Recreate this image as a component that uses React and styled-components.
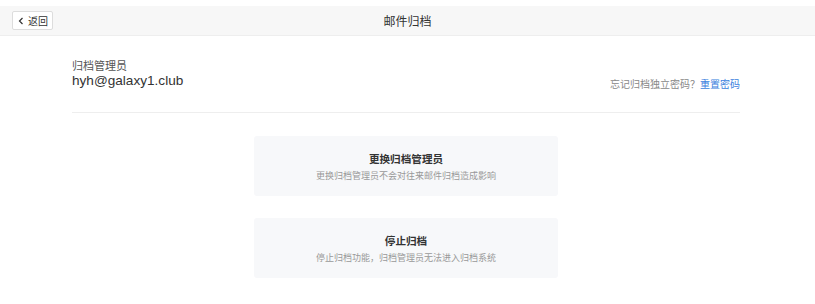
import styled, { createGlobalStyle } from 'styled-components';

const GlobalStyle = createGlobalStyle`
  body {
    margin: 0;
    background: #ffffff;
    font-family: 'Noto Sans CJK SC', 'Liberation Sans', sans-serif;
    color: #333333;
  }
`;

const Page = styled('div')`
  padding-top: 6px;
`;

const Header = styled('div')`
  position: relative;
  height: 29px;
  background: #f7f7f7;
  border-bottom: 1px solid #eeeeee;
  display: flex;
  align-items: center;
  justify-content: center;
`;

const BackButton = styled('button')`
  position: absolute;
  left: 12px;
  top: 5px;
  width: 41px;
  height: 19px;
  box-sizing: border-box;
  padding: 0 0 0 4px;
  border: 1px solid #dddddd;
  border-radius: 2px;
  background: #ffffff;
  display: flex;
  align-items: center;
  gap: 3px;
  font-family: 'Noto Sans CJK SC', sans-serif;
  font-size: 10px;
  color: #333333;
  cursor: pointer;
`;

const Title = styled('h1')`
  margin: 0;
  font-size: 12px;
  font-weight: normal;
  color: #333333;
  line-height: 16px;
`;

const Content = styled('div')`
  width: 668px;
  margin: 0 0 0 72px;
`;

const AdminRow = styled('div')`
  display: flex;
  justify-content: space-between;
  align-items: flex-end;
  padding: 22px 0 23px;
  border-bottom: 1px solid #eeeeee;
`;

const Label = styled('div')`
  font-size: 11px;
  line-height: 14px;
  color: #555555;
`;

const Email = styled('div')`
  font-family: 'Liberation Sans', Arial, sans-serif;
  font-size: 13.6px;
  line-height: 17px;
  color: #333333;
`;

const Hint = styled('div')`
  font-size: 10px;
  line-height: 14px;
  color: #888888;
  margin-bottom: -2px;
`;

const HintLink = styled('a')`
  color: #3a7fde;
  text-decoration: none;
`;

const Actions = styled('div')`
  display: flex;
  flex-direction: column;
  align-items: center;
  gap: 22px;
  padding-top: 23px;
`;

const ActionCard = styled('div')`
  width: 304px;
  height: 60px;
  box-sizing: border-box;
  background: #f7f8fa;
  border-radius: 3px;
  display: flex;
  flex-direction: column;
  align-items: center;
  justify-content: center;
  gap: 4px;
  cursor: pointer;
`;

const ActionTitle = styled('div')`
  font-size: 10.6px;
  font-weight: bold;
  line-height: 15px;
  color: #333333;
`;

const ActionDesc = styled('div')`
  font-size: 9px;
  line-height: 12px;
  color: #999999;
`;

function App() {
  return (
    <>
      <GlobalStyle />
      <Page>
        <Header>
          <BackButton>
            <svg width="8" height="8" viewBox="0 0 8 8">
              <path d="M5.5 1 L2.5 4 L5.5 7" fill="none" stroke="#333" strokeWidth="1.2" />
            </svg>
            返回
          </BackButton>
          <Title>邮件归档</Title>
        </Header>
        <Content>
          <AdminRow>
            <div>
              <Label>归档管理员</Label>
              <Email>hyh@galaxy1.club</Email>
            </div>
            <Hint>
              忘记归档独立密码？<HintLink href="#">重置密码</HintLink>
            </Hint>
          </AdminRow>
          <Actions>
            <ActionCard>
              <ActionTitle>更换归档管理员</ActionTitle>
              <ActionDesc>更换归档管理员不会对往来邮件归档造成影响</ActionDesc>
            </ActionCard>
            <ActionCard>
              <ActionTitle>停止归档</ActionTitle>
              <ActionDesc>停止归档功能，归档管理员无法进入归档系统</ActionDesc>
            </ActionCard>
          </Actions>
        </Content>
      </Page>
    </>
  );
}

export default App;
